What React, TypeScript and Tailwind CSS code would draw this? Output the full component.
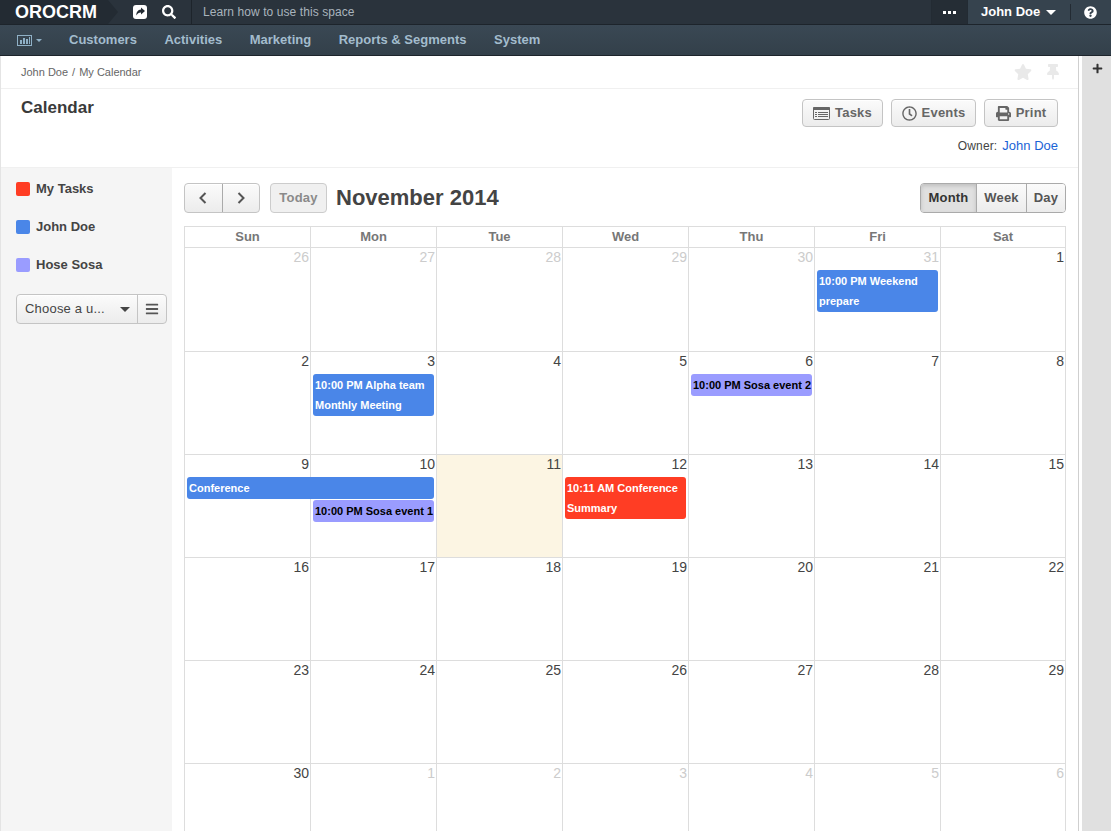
import React from 'react';
import { FaSearch, FaRegClock, FaPrint, FaStar, FaThumbtack, FaQuestionCircle, FaPlus, FaBars } from 'react-icons/fa';

const navItems = ['Customers', 'Activities', 'Marketing', 'Reports & Segments', 'System'];
const dayNames = ['Sun', 'Mon', 'Tue', 'Wed', 'Thu', 'Fri', 'Sat'];

const colStart = ['col-start-1', 'col-start-2', 'col-start-3', 'col-start-4', 'col-start-5', 'col-start-6', 'col-start-7'];

interface Day {
  n: number;
  muted?: boolean;
  today?: boolean;
}

interface CalEvent {
  col: string;
  row: string;
  text: string;
  color: string;
}

const BLUE = 'bg-[#4a86e8] text-white';
const PURPLE = 'bg-[#9a9cff] text-black';
const RED = 'bg-[#ff3d24] text-white';

const d = (from: number, muted = false): Day[] => Array.from({ length: 7 }, (_, i) => ({ n: from + i, muted }));

const weeks: { days: Day[]; height: string; events: CalEvent[] }[] = [
  {
    days: [...d(26, true).slice(0, 6), { n: 1 }],
    height: 'h-[104px]',
    events: [{ col: 'col-start-6', row: 'row-start-2 row-span-2', text: '10:00 PM Weekend prepare', color: BLUE }],
  },
  {
    days: d(2),
    height: 'h-[103px]',
    events: [
      { col: 'col-start-2', row: 'row-start-2 row-span-2', text: '10:00 PM Alpha team Monthly Meeting', color: BLUE },
      { col: 'col-start-5', row: 'row-start-2', text: '10:00 PM Sosa event 2', color: PURPLE },
    ],
  },
  {
    days: d(9).map((x) => (x.n === 11 ? { ...x, today: true } : x)),
    height: 'h-[103px]',
    events: [
      { col: 'col-start-1 col-span-2', row: 'row-start-2', text: 'Conference', color: BLUE },
      { col: 'col-start-2', row: 'row-start-3', text: '10:00 PM Sosa event 1', color: PURPLE },
      { col: 'col-start-4', row: 'row-start-2 row-span-2', text: '10:11 AM Conference Summary', color: RED },
    ],
  },
  { days: d(16), height: 'h-[103px]', events: [] },
  { days: d(23), height: 'h-[103px]', events: [] },
  { days: [...d(30).slice(0, 1), ...d(1, true).slice(0, 6)], height: 'h-[103px]', events: [] },
];

const btn = 'flex items-center rounded-[4px] border border-[#c4c4c4] bg-gradient-to-b from-[#fbfbfb] to-[#ececec] shadow-[inset_0_1px_0_#fff]';

function ChartIcon() {
  return (
    <svg width="15" height="11" viewBox="0 0 15 11" className="text-[#8fb0c6]">
      <rect x="0.5" y="0.5" width="14" height="10" fill="none" stroke="currentColor" />
      <rect x="3" y="5" width="2" height="4" fill="currentColor" />
      <rect x="6" y="3" width="2" height="6" fill="currentColor" />
      <rect x="9" y="4" width="2" height="5" fill="currentColor" />
      <rect x="12" y="2" width="1" height="7" fill="currentColor" />
    </svg>
  );
}

// solid rounded square with the arrow knocked out
function ShareIcon() {
  return (
    <svg width="14" height="14" viewBox="0 0 14 14" className="shrink-0">
      <rect width="14" height="14" rx="3" fill="#fff" />
      <path d="M8 2.5 L12 6 L8 9.5 V7.4 C5.8 7.4 4.4 8.2 3.4 10.6 C3.2 7.4 4.8 4.8 8 4.6 Z" fill="#232b33" />
    </svg>
  );
}

function TasksIcon() {
  return (
    <svg width="17" height="13" viewBox="0 0 17 13" className="shrink-0">
      <rect x="0.5" y="0.5" width="16" height="12" rx="1" fill="none" stroke="currentColor" />
      <rect x="0" y="0" width="17" height="3" rx="1" fill="currentColor" />
      <rect x="2" y="5" width="2" height="1" fill="currentColor" />
      <rect x="5" y="5" width="10" height="1" fill="currentColor" />
      <rect x="2" y="7" width="2" height="1" fill="currentColor" />
      <rect x="5" y="7" width="10" height="1" fill="currentColor" />
      <rect x="2" y="9" width="2" height="1" fill="currentColor" />
      <rect x="5" y="9" width="10" height="1" fill="currentColor" />
    </svg>
  );
}

function Caret({ className }: { className: string }) {
  return <span className={`inline-block h-0 w-0 border-x-transparent ${className}`} />;
}

function TopBar() {
  return (
    <div className="flex h-[25px] border-b border-[#1d242b] bg-[#2a333c] text-white">
      <div className="relative flex w-[108px] items-center bg-[#232b33] pl-[15px] text-[18px] font-bold leading-none">
        OROCRM
        <span className="absolute left-full top-0 h-0 w-0 border-y-[12px] border-l-[10px] border-y-transparent border-l-[#232b33]" />
      </div>
      <div className="flex w-[84px] items-center border-r border-[#1d242b] pl-[25px]">
        <ShareIcon />
        <FaSearch className="ml-[15px] text-[14px]" />
      </div>
      <div className="flex flex-1 items-center pl-[11px] text-[12px] tracking-[0.08px] text-[#a9b4bc]">Learn how to use this space</div>
      <div className="flex w-[37px] items-center justify-center border-x border-[#232b33] bg-[#252d35] text-[9px]">
        <span className="h-[3px] w-[13px] bg-[repeating-linear-gradient(90deg,#fff_0,#fff_3px,transparent_3px,transparent_5px)]" />
      </div>
      <div className="flex w-[143px] items-center bg-[#36434e]">
        <span className="ml-[13px] text-[13px] font-bold">John Doe</span>
        <Caret className="ml-[6px] border-x-[5px] border-t-[5px] border-t-white" />
        <span className="ml-[14px] h-[16px] w-px bg-[#232b33]" />
        <FaQuestionCircle className="ml-[13px] text-[13px]" />
      </div>
    </div>
  );
}

function NavBar() {
  return (
    <div className="flex h-[31px] items-center border-b border-[#1d242b] bg-gradient-to-b from-[#3a4854] to-[#33404a] pl-[17px] text-[13px] font-bold text-[#a3bccd]">
      <ChartIcon />
      <Caret className="ml-[4px] border-x-[3px] border-t-[3px] border-t-[#8fb0c6]" />
      <div className="ml-[27px] flex gap-[27.5px]">
        {navItems.map((item) => (
          <span key={item}>{item}</span>
        ))}
      </div>
    </div>
  );
}

function PageHeader() {
  return (
    <>
      <div className="flex h-[33px] items-center justify-between border-b border-[#f0f0f0] pl-[20px] pr-[17px] text-[11px] text-[#666]">
        <div className="flex">
          <span>John Doe</span>
          <span className="mx-[4px]">/</span>
          <span>My Calendar</span>
        </div>
        <div className="flex items-center gap-[13px] text-[#e9e9e9]">
          <FaStar className="text-[18px]" />
          <FaThumbtack className="text-[16px]" />
        </div>
      </div>
      <div className="flex h-[79px] justify-between border-b border-[#f0f0f0] pl-[20px] pr-[20px]">
        <h1 className="mt-[8px] text-[17px] font-bold leading-[21px] text-[#3a3a3a]">Calendar</h1>
        <div className="flex flex-col items-end pt-[10px]">
          <div className="flex gap-[8px] text-[13px] font-bold tracking-[0.2px] text-[#666]">
            <button className={`${btn} h-[28px] w-[81px] justify-center gap-[5px]`}>
              <TasksIcon />
              Tasks
            </button>
            <button className={`${btn} h-[28px] w-[85px] justify-center gap-[5px]`}>
              <FaRegClock className="text-[15px]" />
              Events
            </button>
            <button className={`${btn} h-[28px] w-[74px] justify-center gap-[5px]`}>
              <FaPrint className="text-[15px]" />
              Print
            </button>
          </div>
          <div className="mt-[11px] flex gap-[5px] text-[12px] leading-[16px] tracking-[0.15px] text-[#444]">
            <span>Owner:</span>
            <span className="text-[13px] tracking-normal text-[#1a63d6]">John Doe</span>
          </div>
        </div>
      </div>
    </>
  );
}

function Sidebar() {
  const items = [
    { name: 'My Tasks', color: 'bg-[#ff3d24]' },
    { name: 'John Doe', color: 'bg-[#4a86e8]' },
    { name: 'Hose Sosa', color: 'bg-[#9a9cff]' },
  ];
  return (
    <div className="w-[171px] shrink-0 bg-[#f5f5f5] pl-[15px] pt-[14px]">
      <div className="flex flex-col gap-[24px]">
        {items.map((it) => (
          <div key={it.name} className="flex h-[14px] items-center gap-[6px] text-[13px] font-bold text-[#444]">
            <span className={`h-[14px] w-[14px] rounded-[2px] ${it.color}`} />
            {it.name}
          </div>
        ))}
      </div>
      <div className={`${btn} mt-[22px] h-[30px] w-[151px]`}>
        <div className="flex h-full flex-1 items-center justify-between pl-[8px] pr-[7px] text-[13px] tracking-[0.2px] text-[#444]">
          Choose a u...
          <Caret className="border-x-[5px] border-t-[5px] border-t-[#444]" />
        </div>
        <div className="flex h-full w-[29px] items-center justify-center border-l border-[#c4c4c4] text-[#555]">
          <FaBars className="text-[14px]" />
        </div>
      </div>
    </div>
  );
}

function Toolbar() {
  return (
    <div className="flex h-[30px] items-center">
      <div className={`${btn} h-[30px] w-[76px] border-[#aaa] text-[#555]`}>
        <div className="flex h-full flex-1 items-center justify-center border-r border-[#aaa]">
          <svg width="8" height="12" viewBox="0 0 8 12" fill="none" stroke="currentColor" strokeWidth="2"><path d="M6.5 1 L1.5 6 L6.5 11" /></svg>
        </div>
        <div className="flex h-full flex-1 items-center justify-center">
          <svg width="8" height="12" viewBox="0 0 8 12" fill="none" stroke="currentColor" strokeWidth="2"><path d="M1.5 1 L6.5 6 L1.5 11" /></svg>
        </div>
      </div>
      <div className="ml-[10px] flex h-[30px] w-[57px] items-center justify-center rounded-[4px] border border-[#ccc] bg-[#f0f0f0] text-[13px] font-bold tracking-[0.2px] text-[#8a8a8a]">Today</div>
      <h2 className="ml-[9px] text-[22px] font-bold leading-none text-[#444]">November 2014</h2>
      <div className="ml-auto flex h-[30px] overflow-hidden rounded-[4px] border border-[#aaa] text-[13px] font-bold tracking-[0.2px] text-[#555]">
        <div className="flex w-[56px] items-center justify-center border-r border-[#aaa] bg-[#e0e0e0] text-[#333] shadow-[inset_0_2px_4px_rgba(0,0,0,0.15)]">Month</div>
        <div className="flex w-[50px] items-center justify-center border-r border-[#aaa] bg-gradient-to-b from-[#fbfbfb] to-[#ececec]">Week</div>
        <div className="flex w-[38px] items-center justify-center bg-gradient-to-b from-[#fbfbfb] to-[#ececec]">Day</div>
      </div>
    </div>
  );
}

function Calendar() {
  return (
    <div className="mt-[13px] border-l border-[#ddd]">
      <div className="grid h-[22px] grid-cols-[repeat(6,126px)_125px] border-y border-[#ddd]">
        {dayNames.map((name) => (
          <div key={name} className="flex items-center justify-center border-r border-[#ddd] text-[13px] font-bold text-[#777]">{name}</div>
        ))}
      </div>
      {weeks.map((w, i) => (
        <div key={i} className={`grid grid-cols-[repeat(6,126px)_125px] grid-rows-[22px_23px_23px_1fr] border-b border-[#ddd] ${w.height}`}>
          {w.days.map((day, c) => (
            <div key={c} className={`${colStart[c]} row-start-1 row-end-5 border-r border-[#ddd] pr-[1px] text-right text-[14px] leading-[18px] ${day.muted ? 'text-[#ccc]' : 'text-[#444]'} ${day.today ? 'bg-[#fcf5e3]' : ''}`}>
              {day.n}
            </div>
          ))}
          {w.events.map((ev) => (
            <div key={ev.text} className={`${ev.col} ${ev.row} z-10 ml-[2px] mr-[3px] self-start rounded-[3px] py-px pl-[2px] text-[11px] font-bold leading-[20px] ${ev.color}`}>
              {ev.text}
            </div>
          ))}
        </div>
      ))}
    </div>
  );
}

export default function App() {
  return (
    <div className="flex h-[831px] flex-col overflow-hidden bg-white font-['Liberation_Sans',Arial,sans-serif]">
      <TopBar />
      <NavBar />
      <div className="flex min-h-0 flex-1">
        <div className="flex w-[1079px] shrink-0 flex-col border-x border-x-[#e4e4e4] border-r-[#cfcfcf]">
          <PageHeader />
          <div className="flex min-h-0 flex-1">
            <Sidebar />
            <div className="flex-1 pl-[12px] pt-[15px]">
              <div className="w-[882px]">
                <Toolbar />
                <Calendar />
              </div>
            </div>
          </div>
        </div>
        <div className="flex-1 border-l-[3px] border-[#fff] bg-[#e0e0e0] pl-px pt-[7px]">
          <FaPlus className="mx-auto text-[11px] text-[#333]" />
        </div>
      </div>
    </div>
  );
}
